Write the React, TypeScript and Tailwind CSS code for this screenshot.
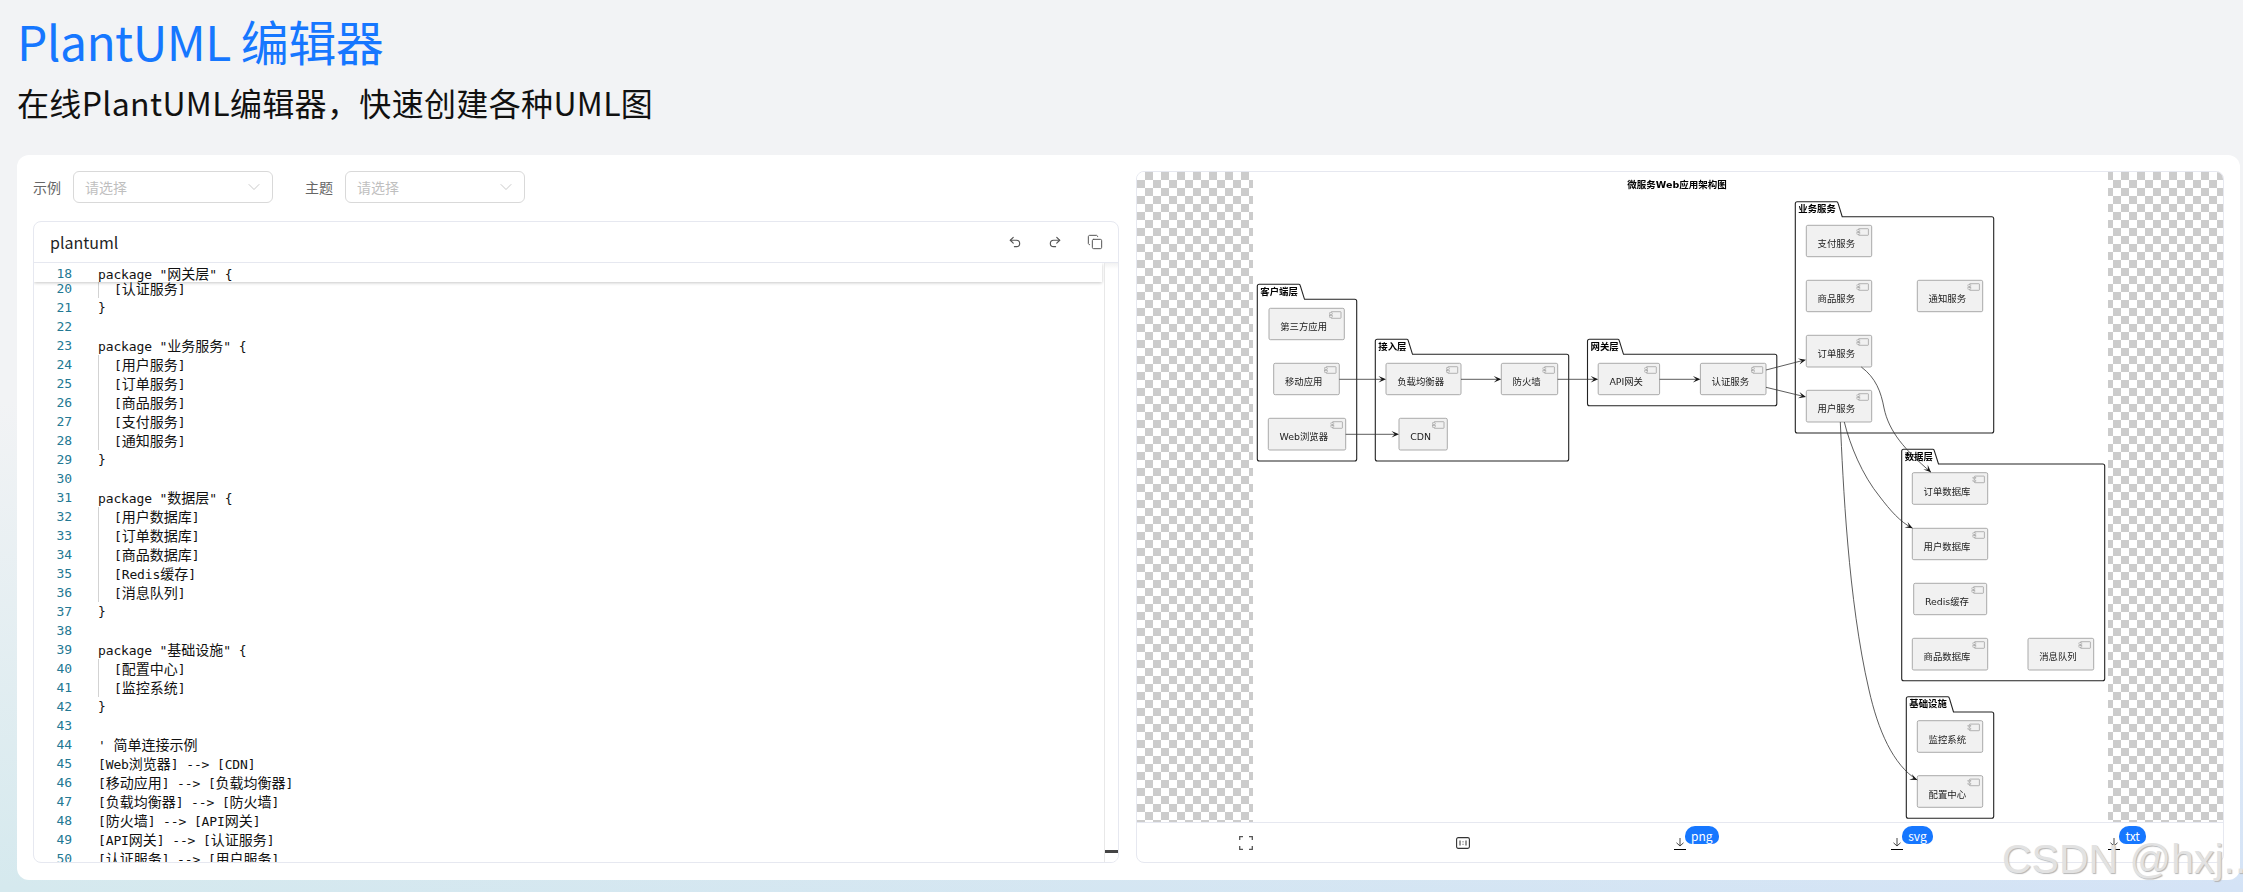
import React from "react";
import { ChevronDown, Undo2, Redo2, Copy } from "lucide-react";

const codeLines: [number, string, boolean][] = [
  [20, "[认证服务]", true],
  [21, "}", false],
  [22, "", false],
  [23, 'package "业务服务" {', false],
  [24, "[用户服务]", true],
  [25, "[订单服务]", true],
  [26, "[商品服务]", true],
  [27, "[支付服务]", true],
  [28, "[通知服务]", true],
  [29, "}", false],
  [30, "", false],
  [31, 'package "数据层" {', false],
  [32, "[用户数据库]", true],
  [33, "[订单数据库]", true],
  [34, "[商品数据库]", true],
  [35, "[Redis缓存]", true],
  [36, "[消息队列]", true],
  [37, "}", false],
  [38, "", false],
  [39, 'package "基础设施" {', false],
  [40, "[配置中心]", true],
  [41, "[监控系统]", true],
  [42, "}", false],
  [43, "", false],
  [44, "' 简单连接示例", false],
  [45, "[Web浏览器] --> [CDN]", false],
  [46, "[移动应用] --> [负载均衡器]", false],
  [47, "[负载均衡器] --> [防火墙]", false],
  [48, "[防火墙] --> [API网关]", false],
  [49, "[API网关] --> [认证服务]", false],
  [50, "[认证服务] --> [用户服务]", false],
];

function Code({ text }: { text: string }) {
  const parts = text.split(/([\u4e00-\u9fff]+)/);
  return (
    <>
      {parts.map((p, i) =>
        /[\u4e00-\u9fff]/.test(p) ? (
          <span key={i} className="text-[14px] tracking-normal font-['Noto_Sans_CJK_SC',sans-serif]">
            {p}
          </span>
        ) : (
          <span key={i}>{p}</span>
        )
      )}
    </>
  );
}

function CodeRow({ n, text, indent }: { n: number; text: string; indent: boolean }) {
  return (
    <div className="flex h-[19px] items-center leading-[19px] whitespace-pre">
      <span className="w-[38px] text-right text-[#237893]">{n}</span>
      <span className="w-[26px] shrink-0" />
      {indent && <span className="h-[19px] w-[16px] shrink-0 border-l border-[#d3d3d3]" />}
      <span className="text-[#111]">
        <Code text={text} />
      </span>
    </div>
  );
}

function Select({ width, label }: { width: string; label: string }) {
  return (
    <div className="flex items-center gap-3">
      <span className="text-sm text-[#666]">{label}</span>
      <div className={`flex h-8 items-center justify-between rounded-md border border-[#d9d9d9] bg-white pl-[11px] pr-2 ${width}`}>
        <span className="text-sm text-[#bfbfbf]">请选择</span>
        <ChevronDown size={20} strokeWidth={1} className="text-[#bfbfbf]" />
      </div>
    </div>
  );
}

type Comp = { x: number; y: number; r: number; b: number; t: string };
const comps: Comp[] = [
  { x: 1269, y: 308.3, r: 1344.3, b: 339.7, t: "第三方应用" },
  { x: 1273.7, y: 363.3, r: 1339.3, b: 394.7, t: "移动应用" },
  { x: 1268.3, y: 418.3, r: 1345.7, b: 450, t: "Web浏览器" },
  { x: 1386, y: 363.3, r: 1461, b: 394.7, t: "负载均衡器" },
  { x: 1501.3, y: 363.3, r: 1557.7, b: 394.7, t: "防火墙" },
  { x: 1399, y: 418.3, r: 1447.3, b: 450, t: "CDN" },
  { x: 1598.2, y: 363.3, r: 1659.6, b: 394.7, t: "API网关" },
  { x: 1700.4, y: 363.3, r: 1766, b: 394.7, t: "认证服务" },
  { x: 1806.3, y: 225.3, r: 1871.7, b: 256.7, t: "支付服务" },
  { x: 1806.3, y: 280.3, r: 1871.7, b: 311.7, t: "商品服务" },
  { x: 1917.3, y: 280.3, r: 1982.7, b: 311.7, t: "通知服务" },
  { x: 1806.3, y: 335.3, r: 1871.7, b: 367, t: "订单服务" },
  { x: 1806.3, y: 390.3, r: 1871.7, b: 422, t: "用户服务" },
  { x: 1912.3, y: 472.7, r: 1987.7, b: 504.3, t: "订单数据库" },
  { x: 1912.3, y: 528.3, r: 1987.7, b: 559.7, t: "用户数据库" },
  { x: 1913.7, y: 583.3, r: 1986.7, b: 614.7, t: "Redis缓存" },
  { x: 1912.3, y: 638.3, r: 1987.7, b: 670, t: "商品数据库" },
  { x: 2028, y: 638.3, r: 2093.7, b: 670, t: "消息队列" },
  { x: 1917.3, y: 720.7, r: 1982.7, b: 752.3, t: "监控系统" },
  { x: 1917.3, y: 775.7, r: 1982.7, b: 807.3, t: "配置中心" },
];

type Pkg = { x: number; y: number; r: number; b: number; top: number; tr: number; t: string };
const pkgs: Pkg[] = [
  { x: 1257.3, y: 299.3, r: 1356.7, b: 461, top: 284.3, tr: 1300, t: "客户端层" },
  { x: 1375.3, y: 354.3, r: 1568.7, b: 461, top: 339.3, tr: 1408, t: "接入层" },
  { x: 1587.5, y: 354.3, r: 1776.8, b: 405.7, top: 339.3, tr: 1619, t: "网关层" },
  { x: 1795.3, y: 216.7, r: 1993.7, b: 433, top: 201.7, tr: 1837.7, t: "业务服务" },
  { x: 1901.7, y: 464, r: 2104.7, b: 680.7, top: 449.3, tr: 1934, t: "数据层" },
  { x: 1906.3, y: 712, r: 1993.7, b: 818.3, top: 696.7, tr: 1949, t: "基础设施" },
];

type Arr = { d: string; x: number; y: number; a: number };
const arrows: Arr[] = [
  { d: "M1339.3 379.3H1384", x: 1386, y: 379.3, a: 0 },
  { d: "M1461 379.3H1499", x: 1501.3, y: 379.3, a: 0 },
  { d: "M1557.7 379.3H1596", x: 1598.2, y: 379.3, a: 0 },
  { d: "M1659.6 379.3H1698", x: 1700.4, y: 379.3, a: 0 },
  { d: "M1345.7 434.3H1397", x: 1399, y: 434.3, a: 0 },
  { d: "M1766 370L1804 360.2", x: 1806, y: 359.7, a: -14 },
  { d: "M1766 387.3L1804 396.5", x: 1806, y: 397, a: 14 },
  { d: "M1861.3 367C1876 378 1881 392 1884 408C1889 432 1905 450 1931 472.3", x: 1931, y: 472.3, a: 43 },
  { d: "M1844.3 422C1850 445 1862 475 1880 497C1890 510 1900 522 1912.7 528.3", x: 1912.7, y: 528.3, a: 28 },
  { d: "M1840.3 422C1843 480 1848 600 1869 690C1878 730 1893 765 1917.3 780", x: 1917.3, y: 780, a: 24 },
];

function Diagram() {
  return (
    <svg viewBox="1253 172 855 650" className="block h-full w-full blur-[0.3px] font-['DejaVu_Sans','Noto_Sans_CJK_SC',sans-serif]">
      <text x="1677" y="188" textAnchor="middle" fontSize="9.5" fontWeight="700" fill="#000">
        微服务Web应用架构图
      </text>
      {pkgs.map((p) => (
        <g key={p.t}>
          <path
            d={`M${p.x} ${p.y}V${p.top + 2}Q${p.x} ${p.top} ${p.x + 2} ${p.top}H${p.tr - 1}Q${p.tr} ${p.top} ${p.tr + 0.5} ${p.top + 2}L${p.tr + 4.5} ${p.y}H${p.r - 2}Q${p.r} ${p.y} ${p.r} ${p.y + 2}V${p.b - 2}Q${p.r} ${p.b} ${p.r - 2} ${p.b}H${p.x + 2}Q${p.x} ${p.b} ${p.x} ${p.b - 2}Z`}
            fill="#fff"
            stroke="#222"
            strokeWidth="1.1"
          />
          <text x={p.x + 3} y={p.top + 10.5} fontSize="9.4" fontWeight="700" fill="#000">
            {p.t}
          </text>
        </g>
      ))}
      {comps.map((c) => (
        <g key={c.t}>
          <rect x={c.x} y={c.y} width={c.r - c.x} height={c.b - c.y} rx="1.5" fill="#f1f1f1" stroke="#a2a2a2" strokeWidth="0.9" />
          <rect x={c.r - 13.3} y={c.y + 3.4} width="10" height="6.6" rx="0.6" fill="#f1f1f1" stroke="#888" strokeWidth="0.6" />
          <rect x={c.r - 14.8} y={c.y + 4.6} width="3" height="1.4" fill="#f1f1f1" stroke="#888" strokeWidth="0.4" />
          <rect x={c.r - 14.8} y={c.y + 7.4} width="3" height="1.4" fill="#f1f1f1" stroke="#888" strokeWidth="0.4" />
          <text x={c.x + 11.2} y={c.y + 22} fontSize="9.4" fill="#1c1c1c">
            {c.t}
          </text>
        </g>
      ))}
      {arrows.map((a, i) => (
        <g key={i}>
          <path d={a.d} fill="none" stroke="#333" strokeWidth="0.8" />
          <polygon
            points="0,0 -7.5,-3.2 -4.2,0 -7.5,3.2"
            fill="#181818"
            transform={`translate(${a.x} ${a.y}) rotate(${a.a})`}
          />
        </g>
      ))}
    </svg>
  );
}

function FullscreenIcon() {
  return (
    <svg width="14" height="14" viewBox="0 0 14 14" fill="none" stroke="#555" strokeWidth="1.3">
      <path d="M.7 4V.7H4M10 .7h3.3V4M13.3 10v3.3H10M4 13.3H.7V10" />
    </svg>
  );
}

function OneToOneIcon() {
  return (
    <svg width="14" height="12" viewBox="0 0 14 12" fill="none" stroke="#333">
      <rect x=".6" y=".6" width="12.8" height="10.8" rx="1.6" strokeWidth="1.1" />
      <path d="M4 3.5v5M10 3.5v5" strokeWidth="1" />
      <path d="M7 4.4v.9M7 6.8v.9" strokeWidth="1" />
    </svg>
  );
}

function DownloadItem({ label }: { label: string }) {
  return (
    <div className="relative flex h-[14px] w-[12px] items-end">
      <svg width="12" height="13" viewBox="0 0 12 13" fill="none">
        <path d="M6 1v8M2.5 5.8 6 9l3.5-3.2" stroke="#444" strokeWidth="1" />
        <path d="M0 12.5h12" stroke="#000" strokeWidth="1" />
      </svg>
      <span className="absolute left-[11px] top-[-10px] h-[18px] overflow-hidden rounded-t-[10px] rounded-b-[7px] bg-[#1677ff] px-[6px] text-xs leading-[20px] text-white">
        {label}
      </span>
    </div>
  );
}

export default function App() {
  return (
    <div className="relative flex h-[892px] w-full flex-col overflow-hidden bg-[linear-gradient(180deg,#f2f3f5_45%,rgba(242,243,245,0)_100%),linear-gradient(90deg,#d5e9ee,#d4e3f6)] font-['Noto_Sans_CJK_SC','Noto_Sans',sans-serif]">
      <header className="pl-[17px]">
        <h1 className="mt-[4px] text-[48px] leading-[72px] tracking-[-0.55px] text-[#1677ff]">PlantUML 编辑器</h1>
        <p className="mt-[2px] text-[32px] leading-[48px] tracking-[0.35px] text-[#111]">在线PlantUML编辑器，快速创建各种UML图</p>
      </header>

      <main className="ml-[17px] mr-[3px] mt-[29px] flex h-[725px] gap-[17px] rounded-xl bg-white px-4 pb-[17px] pt-4">
        <section className="flex min-w-0 flex-1 flex-col">
          <div className="mb-[18px] flex gap-8">
            <Select width="w-[200px]" label="示例" />
            <Select width="w-[180px]" label="主题" />
          </div>
          <div className="flex min-h-0 flex-1 flex-col overflow-hidden rounded-lg border border-[#e6e8f0]">
            <div className="flex h-[41px] shrink-0 items-center justify-between border-b border-[#e6e8f0] pl-4 pr-[15px]">
              <span className="text-base text-[#1f1f1f]">plantuml</span>
              <div className="flex items-center gap-[26px] text-[#555]">
                <Undo2 size={14} />
                <Redo2 size={14} />
                <Copy size={16} strokeWidth={1.5} className="-ml-[1px]" />
              </div>
            </div>
            <div className="flex min-h-0 flex-1">
              <div className="relative min-w-0 flex-1 overflow-hidden pt-[16px] font-['DejaVu_Sans_Mono',monospace] text-[13px] tracking-[-0.13px]">
                {codeLines.map(([n, t, ind]) => (
                  <CodeRow key={n} n={n} text={t} indent={ind} />
                ))}
                <div className="absolute left-0 right-[2px] top-0 h-[19px] bg-white pt-[1px] shadow-[0_1px_3px_rgba(0,0,0,0.22)]">
                  <CodeRow n={18} text={'package "网关层" {'} indent={false} />
                </div>
              </div>
              <div className="relative w-[14px] shrink-0 border-l border-[#e8e8e8] bg-gradient-to-b from-[#f2f2f2] to-white to-[1%]">
                <div className="absolute bottom-[9px] left-0 right-0 h-[3px] bg-[#444]" />
              </div>
            </div>
          </div>
        </section>

        <section className="flex min-w-0 flex-1 flex-col overflow-hidden rounded-lg border border-[#e6e8f0]">
          <div className="flex min-h-0 flex-1 justify-center bg-[conic-gradient(#cccccc_25%,#ffffff_0_50%,#cccccc_0_75%,#ffffff_0)] bg-[length:16px_16px]">
            <div className="h-full w-[855px] bg-white">
              <Diagram />
            </div>
          </div>
          <div className="grid h-[40px] shrink-0 grid-cols-5 items-center justify-items-center border-t border-[#e6e8f0]">
            <FullscreenIcon />
            <OneToOneIcon />
            <DownloadItem label="png" />
            <DownloadItem label="svg" />
            <DownloadItem label="txt" />
          </div>
        </section>
      </main>

      <div className="absolute left-[2002px] top-[835px] whitespace-nowrap font-['Liberation_Sans',sans-serif] text-[41px] leading-[48px] text-[#e2e2e2] [text-shadow:1px_1px_1px_#b4b4b4]">
        CSDN @hxj..
      </div>
    </div>
  );
}
